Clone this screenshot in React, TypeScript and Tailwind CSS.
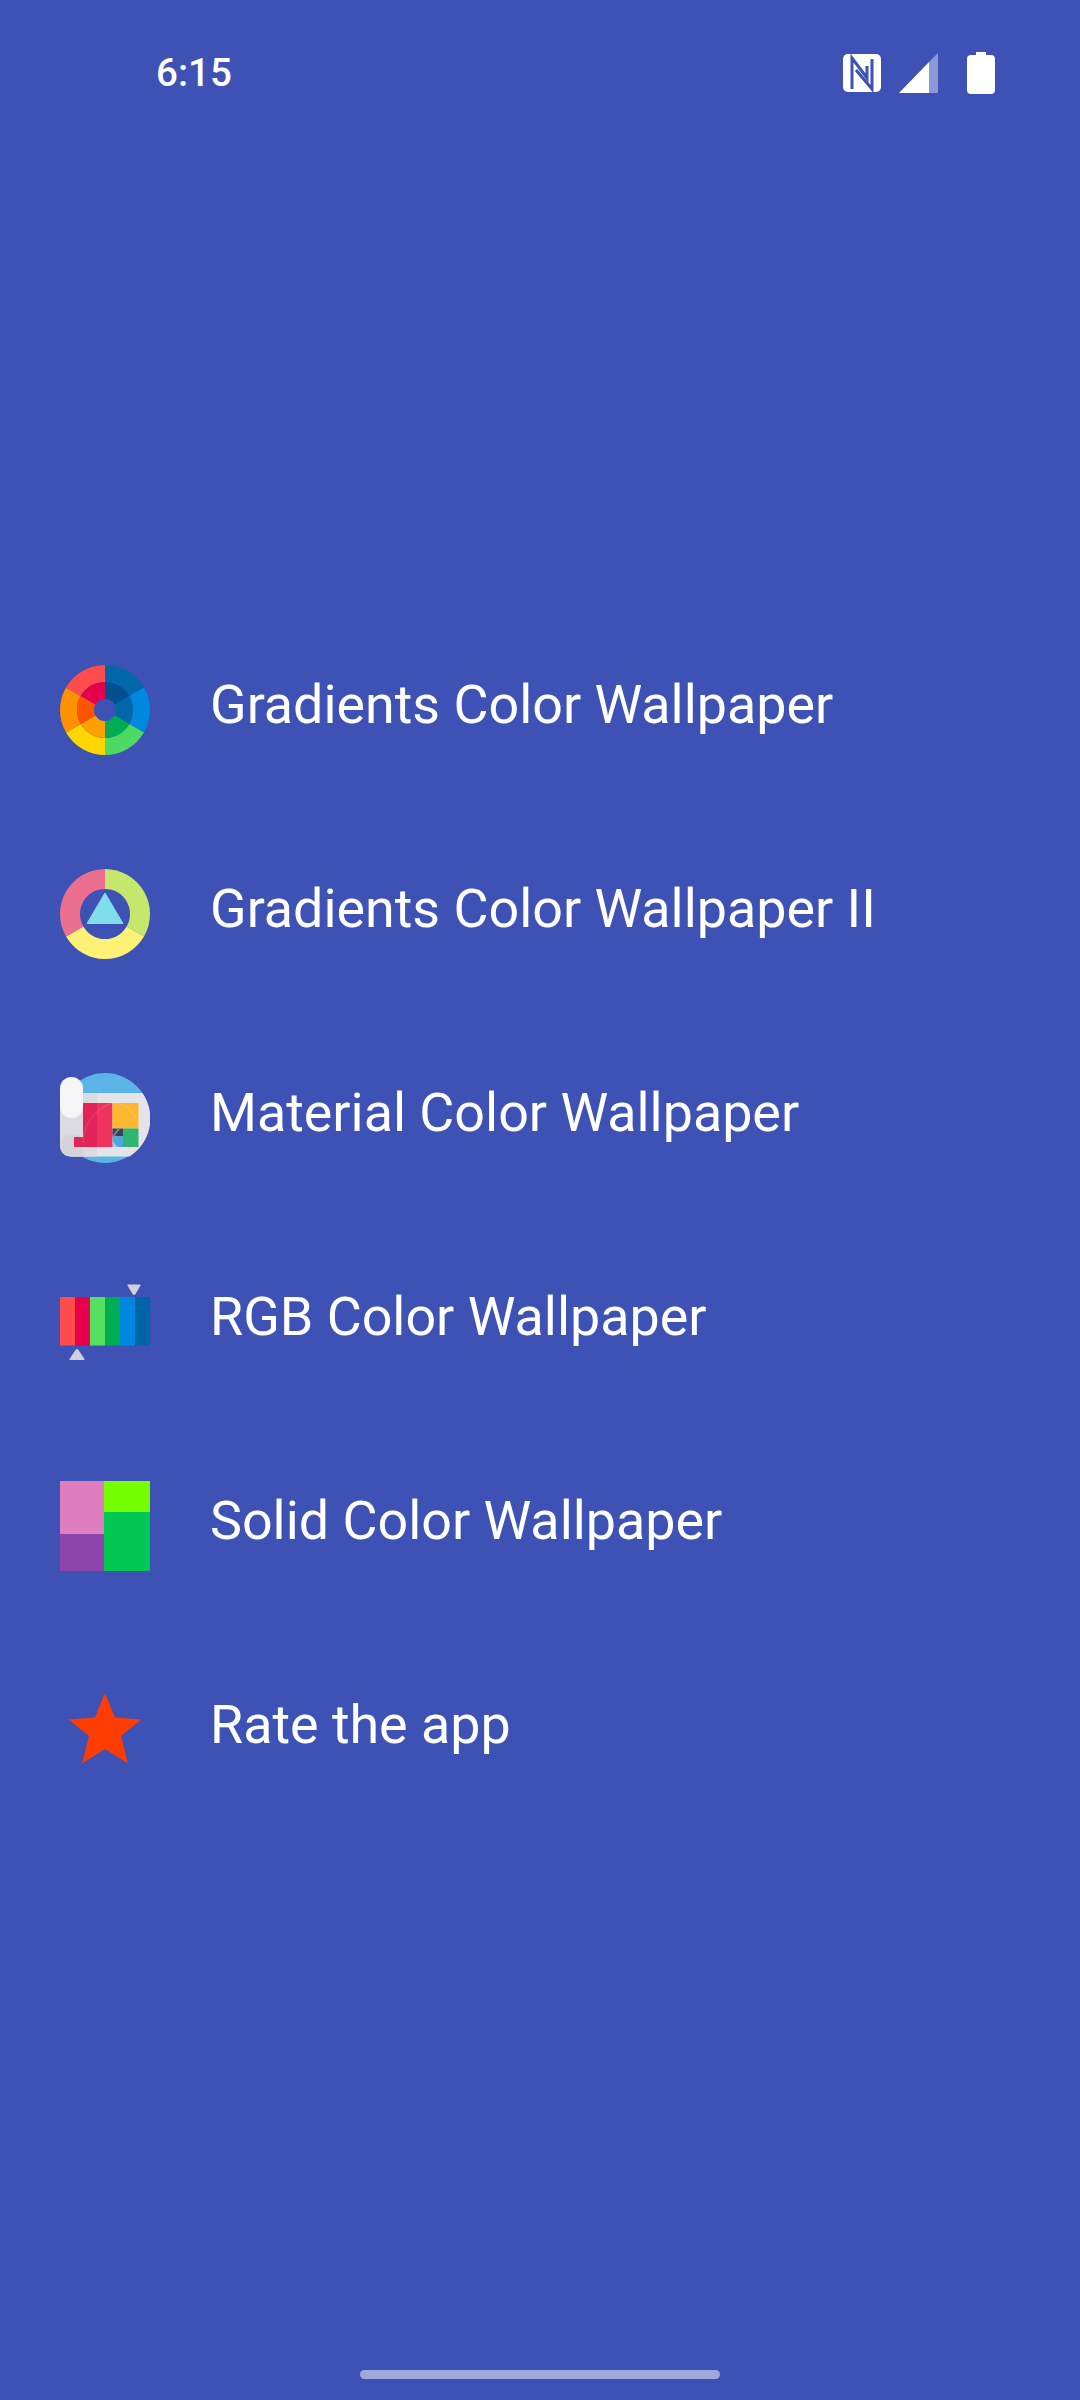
const rows = [
  { label: "Gradients Color Wallpaper", icon: <GradientsIcon /> },
  { label: "Gradients Color Wallpaper II", icon: <GradientsTwoIcon /> },
  { label: "Material Color Wallpaper", icon: <MaterialIcon /> },
  { label: "RGB Color Wallpaper", icon: <RgbIcon /> },
  { label: "Solid Color Wallpaper", icon: <SolidIcon /> },
  { label: "Rate the app", icon: <StarIcon /> },
];

// ring slice, angles in degrees clockwise from 12 o'clock, centre 45,45
function slice(r1: number, r2: number, from: number, to: number) {
  const pt = (r: number, a: number) => {
    const rad = (a * Math.PI) / 180;
    return `${(45 + r * Math.sin(rad)).toFixed(2)} ${(45 - r * Math.cos(rad)).toFixed(2)}`;
  };
  return `M${pt(r2, from)} A${r2} ${r2} 0 0 1 ${pt(r2, to)} L${pt(r1, to)} A${r1} ${r1} 0 0 0 ${pt(r1, from)} Z`;
}

function GradientsIcon() {
  const outer = ["#0068a8", "#0088e0", "#4cd964", "#ffd600", "#ff9100", "#ff4c4c"];
  const inner = ["#00508f", "#0068a8", "#00ad55", "#ff9f00", "#ff5500", "#e6004c"];
  return (
    <svg viewBox="0 0 90 90" className="w-[90px] h-[90px]">
      {outer.map((c, i) => (
        <path key={c} d={slice(28, 45, i * 60, i * 60 + 60)} fill={c} />
      ))}
      {inner.map((c, i) => (
        <path key={c} d={slice(11, 28, i * 60, i * 60 + 60)} fill={c} />
      ))}
    </svg>
  );
}

function GradientsTwoIcon() {
  return (
    <svg viewBox="0 0 90 90" className="w-[90px] h-[90px]">
      <path d={slice(25, 45, 0, 120)} fill="#c5e86c" />
      <path d={slice(25, 45, 120, 240)} fill="#fff176" />
      <path d={slice(25, 45, 240, 360)} fill="#ec6f90" />
      <path d="M45 24 L63 54.5 H27 Z" fill="#80deea" stroke="#80deea" strokeWidth="1" strokeLinejoin="round" />
    </svg>
  );
}

function MaterialIcon() {
  return (
    <svg viewBox="0 0 90 90" className="w-[90px] h-[90px]">
      <circle cx="45" cy="45" r="45" fill="#5ab4e8" />
      {/* paper, clipped by the circle on its right side */}
      <path d="M20 20 H82.4 A45 45 0 0 1 69.500 83.500 H12 C4 83.500 0 79 0 71 V30 Z" fill="#e4e4e8" />
      <path d="M20 20 H37 V83.500 H12 C4 83.500 0 79 0 71 V30 Z" fill="#dcdce0" />
      <path d="M12 83.500 C5 83.500 0 78 0 72 C0 66 5 62 12 62 C18 62 21 63 23 66 V83.500 Z" fill="#d4d4d8" />
      <path d="M23 30 H37 V74 H14 V64 H23 Z" fill="#e3245b" />
      <rect x="37" y="30" width="15.5" height="44" fill="#f0325f" />
      <rect x="52.5" y="30" width="26" height="25.5" fill="#fdb72e" />
      <rect x="63" y="55.5" width="15.5" height="18.5" fill="#2fb673" />
      <rect x="52.5" y="55.5" width="10.5" height="8" fill="#3a4354" />
      <path d="M52.5 63.5 H63 V74 H60 C56 74 52.5 69 52.5 63.5 Z" fill="#4aa8e0" />
      <rect x="52.5" y="63.5" width="10.5" height="10.5" fill="#4aa8e0" fillOpacity="0.45" />
      <path d="M52.5 63 L58 55.5 H60 L54 63.5 Z" fill="#8a8f9a" />
      {/* faint spiral */}
      <path d="M23 70 A42 42 0 0 1 52.5 30 A26 26 0 0 1 78.5 55.5" fill="none" stroke="#ffffff" strokeOpacity="0.1" strokeWidth="1.5" />
      <rect x="0" y="4" width="23" height="41" rx="11.5" fill="#f6f6f8" />
    </svg>
  );
}

function RgbIcon() {
  const bars = ["#ff4c4c", "#e6004c", "#55e060", "#00ad55", "#0088e0", "#0065a8"];
  return (
    <svg viewBox="0 0 90 90" className="w-[90px] h-[90px]">
      <path d="M68 7.5 H80 Q81 7.5 80.5 8.5 L75.5 17 Q74 19 72.5 17 L67.5 8.5 Q67 7.5 68 7.5 Z" fill="#d0d0da" />
      <g>
        {bars.map((c, i) => (
          <rect key={c} x={i * 15} y="20" width="15" height="48.5" fill={c} />
        ))}
      </g>
      <path d="M10 83 H24 Q25 83 24.5 82 L18.5 73 Q17 71 15.500 73 L9.500 82 Q9 83 10 83 Z" fill="#d0d0da" />
    </svg>
  );
}

function SolidIcon() {
  return (
    <svg viewBox="0 0 90 90" className="w-[90px] h-[90px]">
      <rect x="0" y="0" width="44" height="53" fill="#e07fc0" />
      <rect x="0" y="53" width="44" height="37" fill="#8e44ad" />
      <rect x="44" y="0" width="46" height="31" fill="#76ff03" />
      <rect x="44" y="31" width="46" height="59" fill="#00c853" />
    </svg>
  );
}

function StarIcon() {
  return (
    <svg viewBox="0 0 90 90" className="w-[90px] h-[90px]">
      <path d="M45 8 L55 32.5 L81.5 34.5 L61 51 L68 78.5 L45 64 L22 78.5 L29 51 L8.5 34.5 L35 32.5 Z" fill="#ff3d00" />
    </svg>
  );
}

export default function App() {
  return (
    <div className="relative w-[1080px] h-[2400px] bg-[#3e51b4] text-white font-['Roboto',sans-serif] overflow-hidden">
      {/* status bar */}
      <div className="flex items-center h-[146px] pl-[156px] pr-[85px]">
        <span className="text-[38.5px] font-medium leading-none">6:15</span>
        <div className="ml-auto flex items-center gap-[18px]">
          <svg viewBox="0 0 38 38" className="w-[38px] h-[38px]">
            <rect width="38" height="38" rx="5" fill="#fff" />
            <path
              d="M9 35 V4 L24 24 V12 M13 16 L29 35 V5"
              fill="none"
              stroke="#3e51b4"
              strokeWidth="3"
              strokeLinejoin="miter"
            />
          </svg>
          <svg viewBox="0 0 40 40" className="w-[40px] h-[40px]">
            <path d="M0 40 L30 9 V40 Z" fill="#fff" />
            <path d="M30 9 L39 0 V40 H30 Z" fill="#8c98d6" />
          </svg>
          <svg viewBox="0 0 28 42" className="ml-[10px] w-[28px] h-[42px]">
            <path d="M9 0 H19 V3 H24 A4 4 0 0 1 28 7 V38 A4 4 0 0 1 24 42 H4 A4 4 0 0 1 0 38 V7 A4 4 0 0 1 4 3 H9 Z" fill="#fff" />
          </svg>
        </div>
      </div>

      {/* menu */}
      <div className="flex flex-col pt-[462px]">
        {rows.map((r) => (
          <div key={r.label} className="flex items-center h-[204px] pl-[60px] gap-[60px]">
            {r.icon}
            <span className="text-[53.8px] leading-none pb-[10px]">{r.label}</span>
          </div>
        ))}
      </div>

      {/* gesture bar */}
      <div className="absolute left-[360px] top-[2370px] w-[360px] h-[9px] rounded-full bg-[#9fa8da]" />
    </div>
  );
}
